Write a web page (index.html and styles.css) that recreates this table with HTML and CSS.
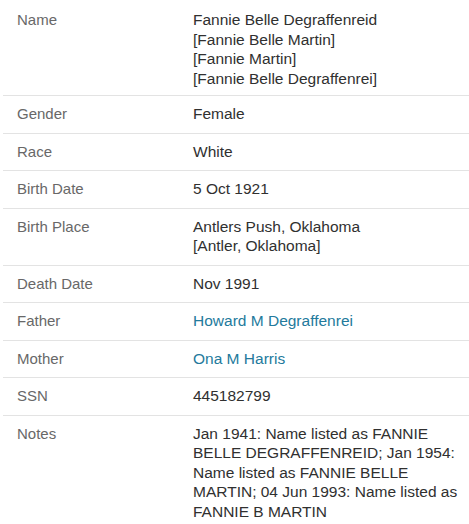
FILE: index.html
```html
<!DOCTYPE html>
<html lang="en">
<head>
<meta charset="utf-8">
<title>Record</title>
<link rel="stylesheet" href="styles.css">
</head>
<body>
<div class="record">
  <div class="row">
    <div class="label">Name</div>
    <div class="value">Fannie Belle Degraffenreid<br>[Fannie Belle Martin]<br>[Fannie Martin]<br>[Fannie Belle Degraffenrei]</div>
  </div>
  <div class="row">
    <div class="label">Gender</div>
    <div class="value">Female</div>
  </div>
  <div class="row">
    <div class="label">Race</div>
    <div class="value">White</div>
  </div>
  <div class="row">
    <div class="label">Birth Date</div>
    <div class="value">5 Oct 1921</div>
  </div>
  <div class="row">
    <div class="label">Birth Place</div>
    <div class="value">Antlers Push, Oklahoma<br>[Antler, Oklahoma]</div>
  </div>
  <div class="row">
    <div class="label">Death Date</div>
    <div class="value">Nov 1991</div>
  </div>
  <div class="row">
    <div class="label">Father</div>
    <div class="value"><a class="link" href="#">Howard M Degraffenrei</a></div>
  </div>
  <div class="row">
    <div class="label">Mother</div>
    <div class="value"><a class="link" href="#">Ona M Harris</a></div>
  </div>
  <div class="row">
    <div class="label">SSN</div>
    <div class="value">445182799</div>
  </div>
  <div class="row">
    <div class="label">Notes</div>
    <div class="value">Jan 1941: Name listed as FANNIE BELLE DEGRAFFENREID; Jan 1954: Name listed as FANNIE BELLE MARTIN; 04 Jun 1993: Name listed as FANNIE B MARTIN</div>
  </div>
</div>
</body>
</html>
```

FILE: styles.css
```css
html, body {
  margin: 0;
  padding: 0;
  background: #ffffff;
}

body {
  font-family: "Liberation Sans", Arial, sans-serif;
}

.record {
  margin: 0 0 0 3px;
  width: 466px;
}

.row {
  display: grid;
  grid-template-columns: 176px 268px;
  padding: 8px 8px 9px 14px;
  border-bottom: 1px solid #e3e3e3;
  line-height: 19.5px;
}

.row:first-child {
  padding-top: 10px;
  padding-bottom: 7px;
}

.label {
  font-size: 15px;
  color: #686868;
}

.value {
  font-size: 15.5px;
  color: #303030;
}

.link {
  color: #237a9c;
  text-decoration: none;
}
```
